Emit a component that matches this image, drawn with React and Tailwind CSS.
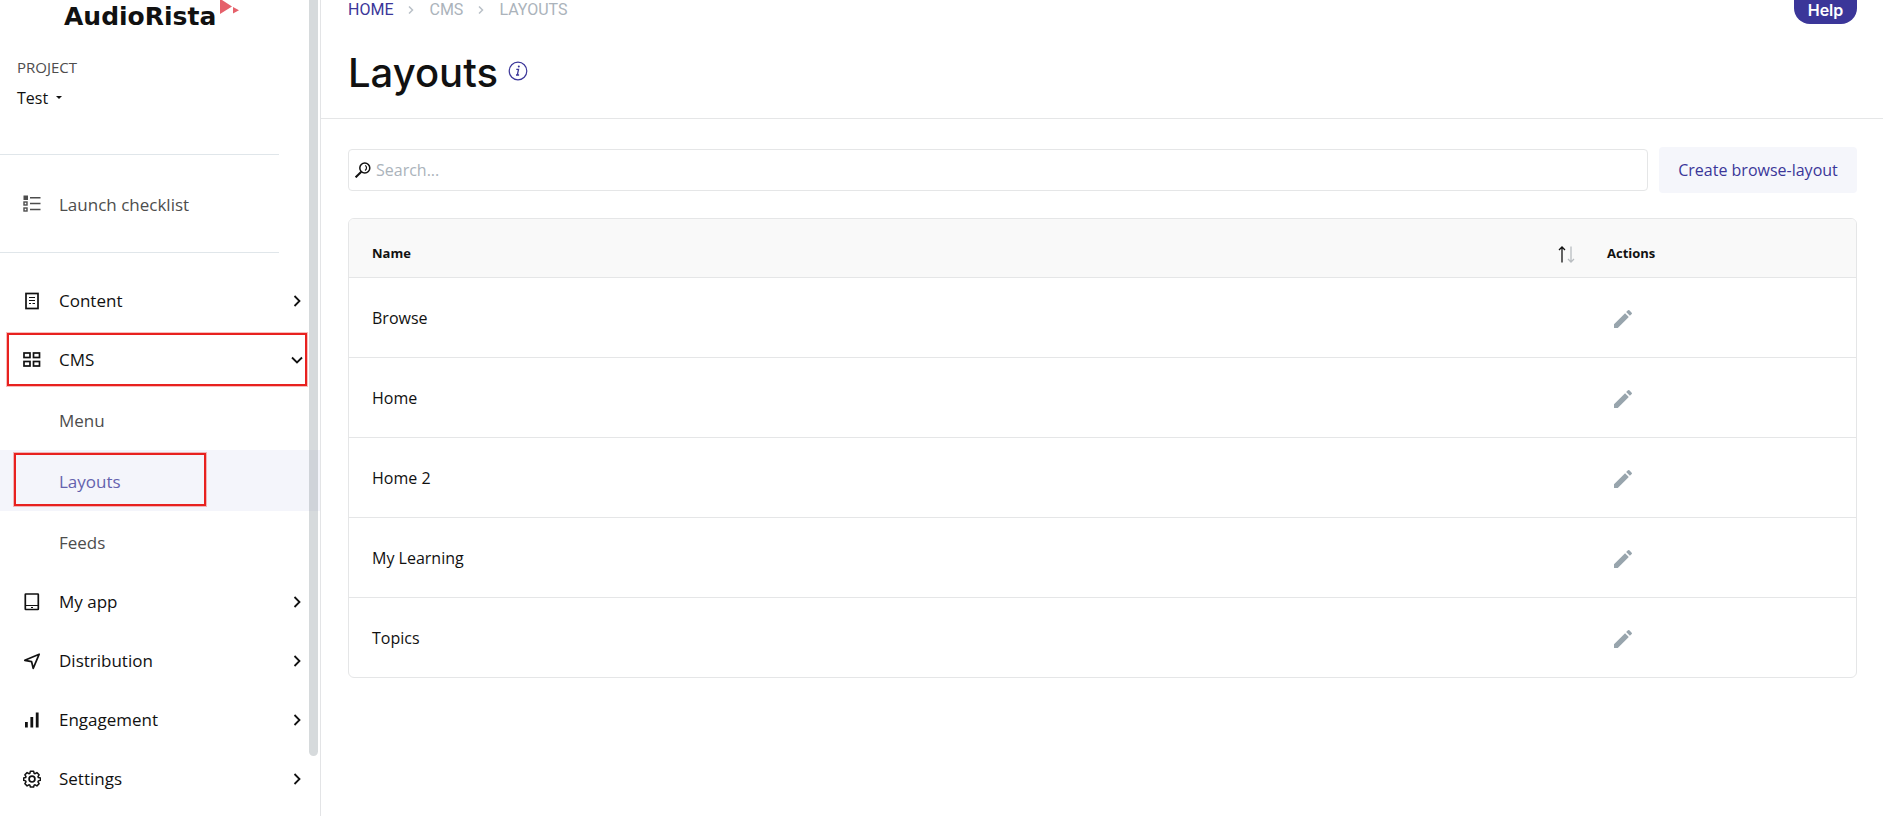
import React, { useState } from "react";
import { MdEdit } from "react-icons/md";

const rows = ["Browse", "Home", "Home 2", "My Learning", "Topics"];

const icons = {
  content: (
    <>
      <rect x="3" y="1.5" width="12" height="15" />
      <path d="M6 5.500h6M6 8.500h6M6 11.500h2M9.500 11.500h2.500" strokeWidth="1.100" />
    </>
  ),
  cms: (
    <>
      <rect x="1" y="2" width="6" height="4.500" />
      <rect x="10.500" y="2" width="6" height="4.500" />
      <rect x="1" y="10.500" width="6" height="4.500" />
      <rect x="10.500" y="10.500" width="6" height="4.500" />
    </>
  ),
  app: (
    <>
      <rect x="2.300" y="1" width="13" height="15.500" rx="0.500" />
      <path d="M2.300 12.500h13M8 14.500h2" strokeWidth="1.200" />
    </>
  ),
  distribution: <path d="M16.200 2.200 1.800 8.300l6.800 1.400 1.600 6.600z" strokeLinejoin="round" />,
  engagement: <path d="M3.400 11v5.600M8.800 6v10.600M14.200 1.500v15.100" strokeWidth="2.800" />,
  settings: (
    <>
      <path
        d="M7.400 1.200h3.200l.5 2.100 1 .4 1.800-1.100 2.200 2.200-1.100 1.800.4 1 2.100.5v2.200l-2.100.6-.4 1 1.100 1.800-2.200 2.200-1.800-1.100-1 .4-.5 1.900H7.400l-.5-1.900-1-.4-1.800 1.100-2.200-2.200L3 11.900l-.4-1-2-.6V8.100l2-.5.4-1-1.100-1.800 2.200-2.200 1.800 1.100 1-.4z"
        strokeLinejoin="round"
        strokeWidth="1.500"
      />
      <circle cx="9" cy="9.100" r="2.900" />
    </>
  ),
};

const menu = [
  { name: "Content", icon: "content" },
  { name: "CMS", icon: "cms", children: ["Menu", "Layouts", "Feeds"] },
  { name: "My app", icon: "app" },
  { name: "Distribution", icon: "distribution" },
  { name: "Engagement", icon: "engagement" },
  { name: "Settings", icon: "settings" },
];

const NavIcon = ({ name }) => (
  <svg
    viewBox="0 0 18 18"
    className="h-[18px] w-[18px] shrink-0"
    fill="none"
    stroke="currentColor"
    strokeWidth="1.700"
  >
    {icons[name]}
  </svg>
);

const Chevron = ({ open }) => (
  <svg viewBox="0 0 12 12" className="h-3 w-3" fill="none" stroke="currentColor" strokeWidth="1.800">
    {open ? <path d="M1 3.500l5 5 5-5" /> : <path d="M3.500 1l5 5-5 5" />}
  </svg>
);

const Sidebar = () => {
  const [open, setOpen] = useState("CMS");

  return (
    <aside className="relative w-[321px] shrink-0 border-r border-[#e3e4e6]">
      <div className="flex h-14 pl-16">
        <span className="font-['DejaVu_Sans',sans-serif] text-[25px] leading-[34px] font-bold text-[#111]">
          AudioRista
        </span>
        <svg viewBox="0 0 20 14" className="ml-1 h-[14px] w-5" fill="#e5616b">
          <path d="M0 0h2l10 6.500L0 14zM13 7l6 3.300-6 3.200z" />
        </svg>
      </div>

      <div className="mr-[41px] flex h-[99px] flex-col items-start border-b border-[#e0e6ea] pl-[17px]">
        <span className="text-[15px] leading-[22px] text-[#4d4d4d]">PROJECT</span>
        <button type="button" className="mt-1.5 flex items-center gap-2 text-base leading-7">
          Test
          <svg viewBox="0 0 6 4" className="h-1 w-1.5" fill="currentColor">
            <path d="M0 0h6L3 3z" />
          </svg>
        </button>
      </div>

      <a
        href="#checklist"
        className="mr-[41px] flex h-[98px] items-center gap-[18px] border-b border-[#e0e6ea] pl-[23px] text-[17px] text-[#4d4d4d]"
      >
        <svg viewBox="0 0 18 18" className="h-[18px] w-[18px] shrink-0" fill="none" stroke="currentColor">
          <rect x="1" y="1" width="3.500" height="3.500" fill="currentColor" />
          <rect x="1" y="7" width="3" height="3" strokeWidth="1.400" />
          <rect x="1" y="13" width="3" height="3" strokeWidth="1.400" />
          <path d="M7 2.700h10.500M7 8.500h10.500M7 14.500h10.500" strokeWidth="1.600" />
        </svg>
        <span className="pt-0.5">Launch checklist</span>
      </a>

      <nav className="pt-[18px]">
        {menu.map((item) => (
          <div key={item.name}>
            <button
              type="button"
              onClick={() => setOpen(open === item.name ? null : item.name)}
              className="relative flex h-[59px] w-full items-center gap-[18px] pr-[17px] pl-[23px] text-[17px]"
            >
              <NavIcon name={item.icon} />
              <span className="flex-1 text-left">{item.name}</span>
              <Chevron open={open === item.name && item.children} />
              {item.name === "CMS" && (
                <span className="absolute top-[3px] right-[13px] bottom-[3px] left-[7px] border-2 border-[#e8211f] ring-1 ring-[#e8211f]/30" />
              )}
            </button>
            {open === item.name &&
              item.children?.map((child) => (
                <a
                  key={child}
                  href={`#${child}`}
                  className={`relative flex h-[61px] items-center pt-0.5 pl-[59px] text-[17px] ${
                    child === "Layouts" ? "bg-[#f4f5fb] text-[#6462ae]" : "text-[#4d4d4d]"
                  }`}
                >
                  {child}
                  {child === "Layouts" && (
                    <span className="absolute top-[3px] bottom-[5px] left-3.5 w-48 border-2 border-[#e8211f] ring-1 ring-[#e8211f]/30" />
                  )}
                </a>
              ))}
          </div>
        ))}
      </nav>

      {/* scroll thumb */}
      <div className="absolute top-0 right-0.5 h-[756px] w-[9px] rounded-b-full bg-[#8a959c]/35" />
    </aside>
  );
};

const Separator = () => (
  <svg viewBox="0 0 6 8" className="h-2 w-1.5" fill="none" stroke="#b9c0c7" strokeWidth="1.500">
    <path d="M1 .5 4.500 4 1 7.500" />
  </svg>
);

const LayoutsTable = () => (
  <div className="mt-[25px] overflow-hidden rounded-md border border-[#e5e6e7]">
    <table className="w-full text-left">
      <thead className="bg-[#f9f9f9] text-[13px]">
        <tr className="h-[58px]">
          <th className="pt-3 pl-[23px] font-bold">
            <div className="flex items-center justify-between pr-2">
              Name
              <button type="button" aria-label="Sort by name">
                <svg viewBox="0 0 18 18" className="h-[18px] w-[18px]" fill="none" strokeWidth="1.300">
                  <path d="M5 17.500V2M2 5l3-3 3 3" stroke="#111" />
                  <path d="M14 1.500V17M11 14l3 3 3-3" stroke="#b9bdc1" />
                </svg>
              </button>
            </div>
          </th>
          <th className="w-[273px] pt-3 pl-6 font-bold">Actions</th>
        </tr>
      </thead>
      <tbody>
        {rows.map((row) => (
          <tr key={row} className="h-20 border-t border-[#e5e6e7]">
            <td className="pt-px pl-[23px] text-base">{row}</td>
            <td className="pt-1 pl-7">
              <button type="button" aria-label={`Edit ${row}`} className="block text-[#98a5ad]">
                <MdEdit size={24} />
              </button>
            </td>
          </tr>
        ))}
      </tbody>
    </table>
  </div>
);

const App = () => {
  const [search, setSearch] = useState("");

  return (
    <div className="flex min-h-screen overflow-hidden bg-white font-['Open_Sans',sans-serif] text-[#111]">
      <Sidebar />
      <main className="min-w-0 flex-1">
        <header className="h-[119px] border-b border-[#e5e6e7] pr-[26px] pl-[27px]">
          <div className="flex items-start justify-between">
            <nav className="flex items-center gap-[15px] font-['Roboto',sans-serif] text-base leading-5 text-[#abb3bb]">
              <a href="#home" className="text-[#3b3699]">HOME</a>
              <Separator />
              <span>CMS</span>
              <Separator />
              <span>LAYOUTS</span>
            </nav>
            <button
              type="button"
              className="h-6 w-[63px] rounded-b-2xl bg-[#3b3699] pb-1 font-['Inter',sans-serif] text-base leading-5 font-semibold text-white"
            >
              Help
            </button>
          </div>
          <div className="mt-6 flex items-start gap-2.5">
            <h1 className="font-['Inter',sans-serif] text-[40px] leading-[50px] font-medium">Layouts</h1>
            <button type="button" aria-label="About layouts" className="mt-[13px] text-[#3b3699]">
              <svg viewBox="0 0 20 20" className="h-5 w-5" fill="none" stroke="currentColor">
                <circle cx="10" cy="10" r="8.800" strokeWidth="1.200" />
                <path d="M8.300 8.300h2.200L9.300 14h1.800M8 14h1.300" strokeWidth="1.300" />
                <circle cx="10.800" cy="5.600" r="1" fill="currentColor" stroke="none" />
              </svg>
            </button>
          </div>
        </header>

        <section className="pt-7 pr-[26px] pl-[27px]">
          <div className="flex items-center gap-[11px]">
            <label className="flex h-[42px] flex-1 items-center gap-[5px] rounded border border-[#e5e6e7] pl-1.5">
              <svg viewBox="0 0 16 16" className="h-4 w-4" fill="none" stroke="#111">
                <circle cx="9.800" cy="6" r="5" strokeWidth="1.500" />
                <path d="M6.300 9.700.6 15.400" strokeWidth="2" />
                <path d="M10 3.500c2 .5 2 4 0 5" strokeWidth="1.200" />
              </svg>
              <input
                type="text"
                aria-label="Search"
                placeholder="Search..."
                value={search}
                onChange={(e) => setSearch(e.target.value)}
                className="flex-1 text-base outline-none placeholder:text-[#abb3bb]"
              />
            </label>
            <button
              type="button"
              className="h-[46px] w-[198px] rounded bg-[#f5f6fb] text-base whitespace-nowrap text-[#3b3699]"
            >
              Create browse-layout
            </button>
          </div>
          <LayoutsTable />
        </section>
      </main>
    </div>
  );
};

export default App;
